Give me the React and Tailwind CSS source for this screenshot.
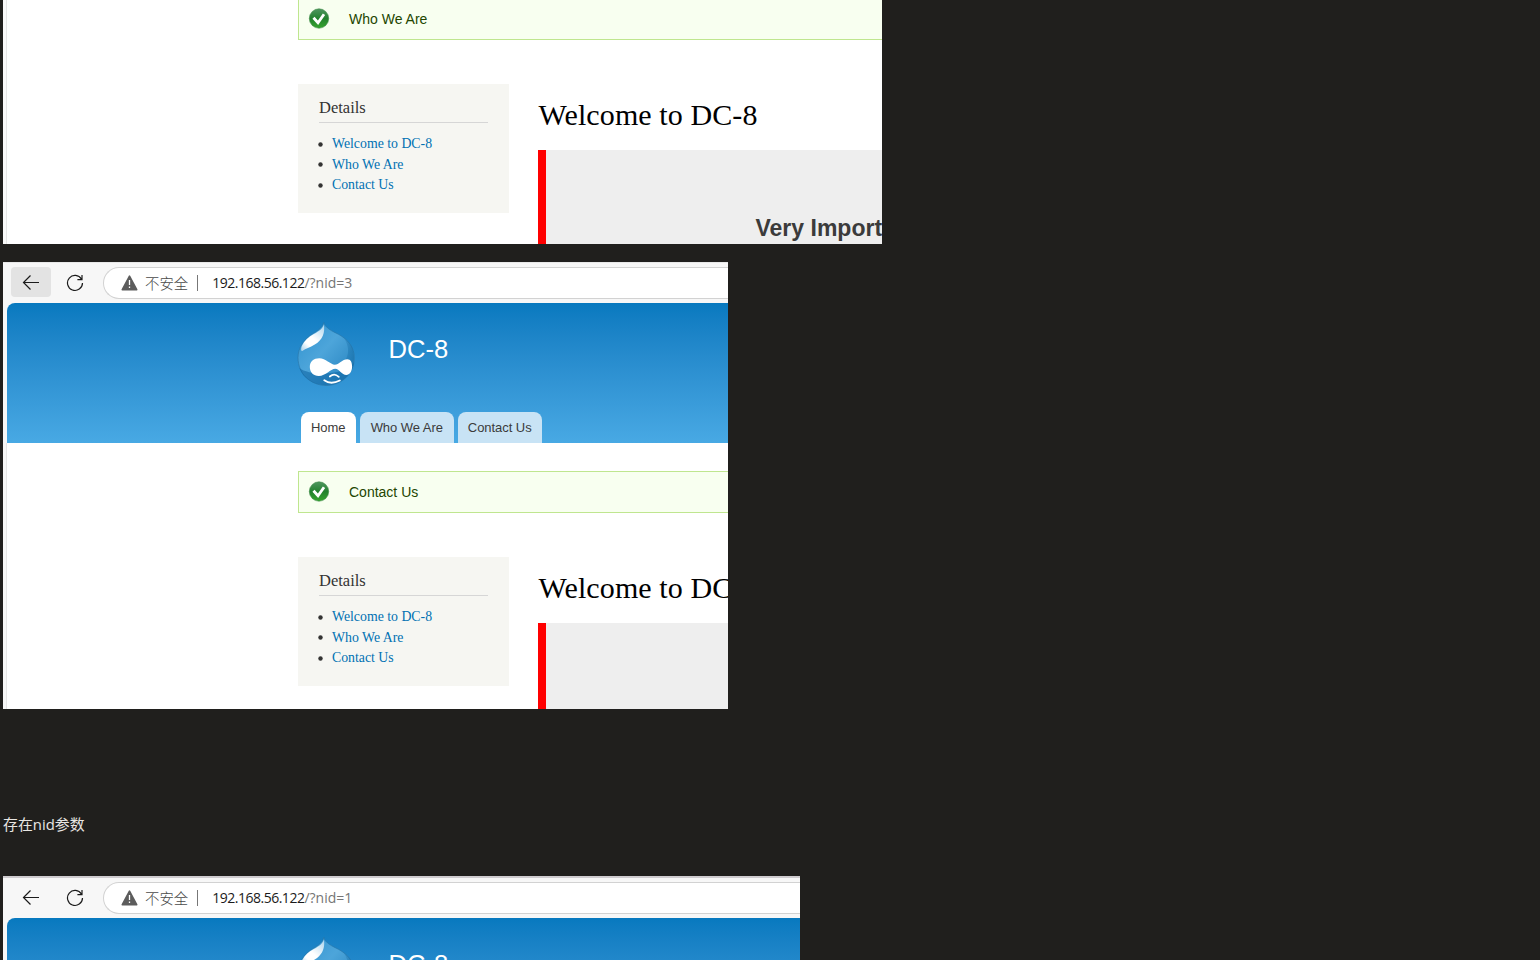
import React from "react";

function Toolbar({ nid, backActive, className }) {
  return (
    <div className={`flex shrink-0 items-end bg-[#f7f7f7] pb-1 pl-2 ${className}`}>
      <div className={`mb-[2px] flex h-[30px] w-10 items-center justify-center rounded ${backActive ? "bg-[#e3e3e3]" : ""}`}>
        <svg width="18" height="18" viewBox="0 0 18 18" fill="none" stroke="#1b1b1b" strokeWidth="1.2">
          <path d="M17 9.5H1.5M8.5 2.5L1.5 9.5l7 7" />
        </svg>
      </div>
      <div className="mb-[1px] ml-[15px] flex h-[30px] w-[18px] items-center justify-center">
        <svg width="18" height="18" viewBox="0 0 18 18" fill="none" stroke="#1b1b1b" strokeWidth="1.2">
          <path d="M15.5 5.2A7.5 7.5 0 1 0 16.5 9M16 1v4.6h-4.6" />
        </svg>
      </div>
      <div className="ml-[19px] flex h-8 flex-1 items-center rounded-l-full border border-r-0 border-[#d2d2d2] bg-white pl-[17px]">
        <svg width="17" height="16" viewBox="0 0 17 16" className="shrink-0">
          <path d="M8.5 1.2L15.7 14.7H1.3z" fill="#5c5c5c" stroke="#5c5c5c" strokeWidth="1.6" strokeLinejoin="round" />
          <path d="M8.5 5v5M8.5 11.6v1.5" stroke="#fff" strokeWidth="1.3" />
        </svg>
        <span className="ml-[7px] whitespace-nowrap pb-px font-['Noto_Sans_CJK_SC',sans-serif] text-[14.4px] font-light leading-5 text-[#4a4a4a]">不安全</span>
        <span className="ml-[9px] h-4 w-px bg-[#777]" />
        <span className="ml-[14px] whitespace-nowrap pb-px font-['Open_Sans',sans-serif] text-[14px] leading-5 tracking-[-0.49px] text-[#1b1b1b]">
          192.168.56.122<span className="tracking-[0px] text-[#757575]">/?nid={nid}</span>
        </span>
      </div>
    </div>
  );
}

function DropLogo({ id }) {
  return (
    <svg width="60" height="66" viewBox="0.2 1 60 66" className="-mt-px shrink-0">
      <defs>
        <linearGradient id={id} x1="0" y1="0" x2="1" y2="1">
          <stop offset="0" stopColor="#2f91cf" />
          <stop offset="0.45" stopColor="#4da5da" />
          <stop offset="1" stopColor="#1f7dbb" />
        </linearGradient>
        <linearGradient id={`${id}-shine`} x1="0.9" y1="0" x2="0.1" y2="1">
          <stop offset="0" stopColor="#fff" stopOpacity="0.6" />
          <stop offset="0.5" stopColor="#fff" />
          <stop offset="0.75" stopColor="#fff" />
          <stop offset="1" stopColor="#fff" stopOpacity="0.6" />
        </linearGradient>
        <linearGradient id={`${id}-shade`} x1="0" y1="0" x2="1" y2="0.2">
          <stop offset="0" stopColor="#1b74b0" stopOpacity="0" />
          <stop offset="1" stopColor="#166fa9" stopOpacity="0.6" />
        </linearGradient>
      </defs>
      <path d="M27 1.500C28.500 7 35 10 42 13.500C51 18.500 57.500 26 57.500 36.500C57.500 53 44.500 64.500 29.500 64.500C14 64.500 1.200 53 1.200 36.500C1.200 27 7 18 16 12.500C22 9 26 6 27 1.500Z" fill={`url(#${id})`} stroke="#2874a5" strokeWidth="0.6" />
      <path d="M2.500 47C6 57 16 64.200 29.500 64.200C44 64.200 56.500 53 57.200 41C51 54 14 56 2.500 47Z" fill="#1168a5" opacity="0.6" />
      <path d="M47 17C54 22 57.500 28 57.200 37C57 43 55 49 51 53L40 47C53 39 54 27 47 17Z" fill={`url(#${id}-shade)`} />
      <path d="M27 3.500C28.500 11 26 19 18 23.500C13 26.500 9 27.500 5.500 30C4 30 4 28 5 25C7.500 19.500 12 15.500 17 13C22.500 10 26 7.500 27 3.500Z" fill={`url(#${id}-shine)`} />
      <path d="M13 46C13 40.500 17 37.300 22.500 37.300C29 37.300 33.500 43.500 38 43.800C42 43.800 45.500 38.300 50.500 38.300C54 38.300 55.300 41.500 55.300 45.500C55.300 50 53 54 49.500 54C45 54 42.500 48 38.500 47.800C33.500 48 29 55 22 55C16.500 55 13 51 13 46Z" fill="#fff" />
      <path d="M33 55.500Q37.500 51.500 42 55.800" fill="none" stroke="#fff" strokeWidth="1.700" strokeLinecap="round" />
      <path d="M27.500 59.300Q34 64 43 59.500" fill="none" stroke="#fff" strokeWidth="1.900" strokeLinecap="round" />
    </svg>
  );
}

function SiteHeader({ id }) {
  return (
    <header className="ml-1 flex h-[140px] shrink-0 flex-col justify-between rounded-tl-lg bg-linear-to-b from-[#0779bf] to-[#48a9e4] pl-[290px]">
      <div className="flex pt-5">
        <DropLogo id={id} />
        <h2 className="ml-[31.5px] mt-[11px] font-['Liberation_Sans',sans-serif] text-[25.6px] leading-[30px] text-white">DC-8</h2>
      </div>
      <nav className="ml-[3.5px] flex gap-1 font-['Liberation_Sans',sans-serif] text-[13px] tracking-[-0.05px] text-[#3b3b3b]">
        <a className="flex h-[31px] w-[55.5px] items-center justify-center rounded-t-lg bg-white">Home</a>
        <a className="flex h-[31px] w-[93.5px] items-center justify-center rounded-t-lg bg-[#c8e3f5]">Who We Are</a>
        <a className="flex h-[31px] w-[84.5px] items-center justify-center rounded-t-lg bg-[#c8e3f5]">Contact Us</a>
      </nav>
    </header>
  );
}

function CheckIcon({ id }) {
  return (
    <svg width="22" height="22" viewBox="0 0 22 22">
      <defs>
        <linearGradient id={id} x1="0" y1="0" x2="0" y2="1">
          <stop offset="0" stopColor="#4f9560" />
          <stop offset="0.5" stopColor="#23812e" />
          <stop offset="1" stopColor="#36a52e" />
        </linearGradient>
      </defs>
      <circle cx="11" cy="10.500" r="9.700" fill={`url(#${id})`} stroke="#3a8a45" strokeWidth="0.6" />
      <path d="M5.500 9.800L10 14.800L16 6.200" fill="none" stroke="#fff" strokeWidth="2.800" />
    </svg>
  );
}

function PageBody({ id, message, notice, messageClass }) {
  return (
    <main className="ml-[3px] flex flex-1 flex-col border-l border-[#e6e6e6] bg-white pl-[291px]">
      <div className={`flex h-[42px] shrink-0 items-center border border-r-0 border-[#bfe68f] bg-[#f8fff0] pl-[9px] ${messageClass}`}>
        <CheckIcon id={id} />
        <span className="ml-[19px] font-['Liberation_Sans',sans-serif] text-[14px] text-[#234600]">{message}</span>
      </div>
      <div className="mt-[43.5px] flex flex-1">
        <aside className="h-[129px] w-[210.5px] shrink-0 bg-[#f6f6f2] pl-[21px] pt-[13.5px] font-['Liberation_Serif',serif]">
          <h2 className="h-[26px] w-[169px] border-b border-[#d6d6d6] text-[16.5px] leading-[21px] text-[#333]">Details</h2>
          <ul className="mt-[11px] text-[13.8px] leading-[20.5px] text-[#0071b3]">
            {["Welcome to DC-8", "Who We Are", "Contact Us"].map((label) => (
              <li key={label} className="flex items-center">
                <svg width="5" height="5" viewBox="0 0 5 5" className="mr-[9px] -ml-px shrink-0">
                  <circle cx="2.5" cy="2.500" r="2.200" fill="#333" />
                </svg>
                {label}
              </li>
            ))}
          </ul>
        </aside>
        <section className="ml-[29.5px] flex flex-1 flex-col">
          <h1 className="whitespace-nowrap pl-[0.5px] pt-[13.5px] font-['Liberation_Serif',serif] text-[30px] leading-9 tracking-[0.1px] text-black">Welcome to DC-8</h1>
          <div className="mt-[17px] flex-1 border-l-8 border-[#f00] bg-[#eee] pl-[209.500px] pt-[64px]">
            {notice && (
              <p className="whitespace-nowrap font-['Liberation_Sans',sans-serif] text-[23px] font-bold leading-7 text-[#3b3b3b]">{notice}</p>
            )}
          </div>
        </section>
      </div>
    </main>
  );
}

export default function App() {
  return (
    <div className="flex h-[960px] w-full flex-col overflow-hidden bg-[#201f1d] pl-[3px]">
      <section className="flex h-[244px] w-[879px] shrink-0 flex-col overflow-hidden bg-[#fafafa]">
        <PageBody id="check-a" message="Who We Are" notice="Very Import" messageClass="-mt-[2px]" />
      </section>
      <section className="mt-[18px] flex h-[447px] w-[725px] shrink-0 flex-col overflow-hidden bg-[#f7f7f7]">
        <Toolbar nid="3" backActive className="h-[41px] border-t border-[#e8e8e8]" />
        <SiteHeader id="drop-a" />
        <PageBody id="check-b" message="Contact Us" messageClass="mt-7" />
      </section>
      <p className="mt-[104px] h-[22px] font-['Open_Sans','Noto_Sans_CJK_SC',sans-serif] text-[14.9px] leading-[22px] text-[#e8e6e3]">存在nid参数</p>
      <section className="mt-[41px] flex h-[84px] w-[797px] shrink-0 flex-col overflow-hidden bg-[#f7f7f7]">
        <Toolbar nid="1" className="h-[42px] border-t-2 border-[#cfcccf]" />
        <SiteHeader id="drop-b" />
      </section>
    </div>
  );
}
